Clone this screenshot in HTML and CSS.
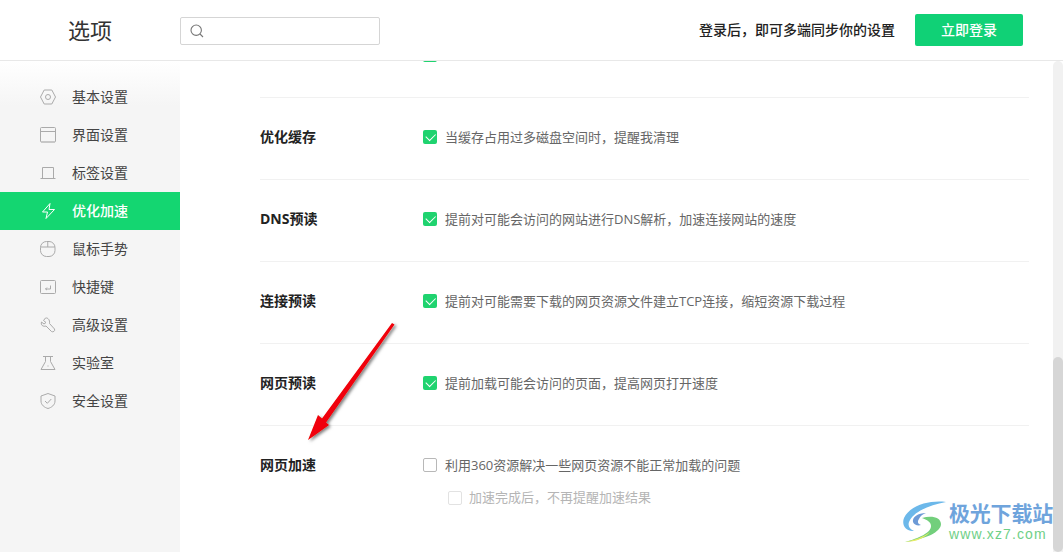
FILE: index.html
```html
<!DOCTYPE html>
<html lang="zh-CN">

<head>
    <meta charset="UTF-8">
    <title>选项</title>
    <link rel="stylesheet" href="styles.css">
</head>

<body>
    <header class="top-bar">
        <h1 class="page-title">选项</h1>
        <label class="search-box">
            <svg width="16" height="16" viewBox="0 0 16 16" fill="none" stroke="#777" stroke-width="1.1">
                <circle cx="7.2" cy="7.2" r="5.2" />
                <path d="M11 11l3 3" />
            </svg>
        </label>
        <p class="login-tip">登录后，即可多端同步你的设置</p>
        <button class="login-btn"><span class="btn-label">立即登录</span></button>
    </header>

    <div class="main">
        <!-- side menu -->
        <nav class="side-menu">
            <a class="menu-item">
                <svg viewBox="0 0 16 16" width="16" height="16">
                    <path d="M4.200 1h7.600L15.500 8l-3.700 7H4.200L.5 8z" />
                    <circle cx="8" cy="8" r="2.500" />
                </svg>
                <span class="menu-label">基本设置</span>
            </a>
            <a class="menu-item">
                <svg viewBox="0 0 16 16" width="16" height="16">
                    <rect x=".5" y=".5" width="15" height="14.500" rx="1" />
                    <path d="M.5 4.500h15" />
                    <path class="thick" d="M1 15h14" />
                </svg>
                <span class="menu-label">界面设置</span>
            </a>
            <a class="menu-item">
                <svg viewBox="0 0 16 16" width="16" height="16">
                    <path d="M2.500 13.500V2.500h11v11M.5 13.500h15" />
                </svg>
                <span class="menu-label">标签设置</span>
            </a>
            <a class="menu-item active">
                <svg viewBox="0 0 16 16" width="16" height="16">
                    <path d="M10 .5L2.500 9h5L6 15.500 14.500 6.500H9z" />
                </svg>
                <span class="menu-label">优化加速</span>
            </a>
            <a class="menu-item">
                <svg viewBox="0 0 16 16" width="16" height="16">
                    <rect x=".5" y=".5" width="14.500" height="15" rx="6" />
                    <path d="M7.750 .5v5.500M.5 6h14.500" />
                </svg>
                <span class="menu-label">鼠标手势</span>
            </a>
            <a class="menu-item">
                <svg viewBox="0 0 16 16" width="16" height="16">
                    <rect x=".5" y="1.500" width="15" height="13" rx="1" />
                    <path d="M10.500 6.500v3.500H5.500M7 8.500L5.500 10 7 11" />
                </svg>
                <span class="menu-label">快捷键</span>
            </a>
            <a class="menu-item">
                <svg viewBox="0 0 16 16" width="16" height="16">
                    <path d="M5.500 1L3.500 3.500 6 5.500 4 7 1.500 5C.5 8 3 10 6 9l5.500 5.500c1.500 1 4-.5 3-2.500l-5-5.500C10 3 8 .5 5.500 1z" />
                </svg>
                <span class="menu-label">高级设置</span>
            </a>
            <a class="menu-item">
                <svg viewBox="0 0 16 16" width="16" height="16">
                    <path d="M3 1.500h10M5.500 1.500v5L1 14.500h14L10.500 6.500v-5M7.500 11h1" />
                </svg>
                <span class="menu-label">实验室</span>
            </a>
            <a class="menu-item">
                <svg viewBox="0 0 16 16" width="16" height="16">
                    <path d="M8 .5l7 2.500v5c0 4-3.500 6.500-7 7.500-3.500-1-7-3.500-7-7.500V3z" />
                    <path d="M5 8l2.300 2.300L11.300 6" />
                </svg>
                <span class="menu-label">安全设置</span>
            </a>
        </nav>

        <!-- settings list, scrolled part way down -->
        <section class="content">
            <div class="settings">
                <div class="row">
                    <span class="row-name"></span>
                    <div class="row-body">
                        <div class="check-line">
                            <span class="box on"></span>
                        </div>
                    </div>
                </div>
                <div class="row">
                    <span class="row-name">优化缓存</span>
                    <div class="row-body">
                        <div class="check-line">
                            <span class="box on"></span>
                            当缓存占用过多磁盘空间时，提醒我清理
                        </div>
                    </div>
                </div>
                <div class="row">
                    <span class="row-name">DNS预读</span>
                    <div class="row-body">
                        <div class="check-line">
                            <span class="box on"></span>
                            提前对可能会访问的网站进行DNS解析，加速连接网站的速度
                        </div>
                    </div>
                </div>
                <div class="row">
                    <span class="row-name">连接预读</span>
                    <div class="row-body">
                        <div class="check-line">
                            <span class="box on"></span>
                            提前对可能需要下载的网页资源文件建立TCP连接，缩短资源下载过程
                        </div>
                    </div>
                </div>
                <div class="row">
                    <span class="row-name">网页预读</span>
                    <div class="row-body">
                        <div class="check-line">
                            <span class="box on"></span>
                            提前加载可能会访问的页面，提高网页打开速度
                        </div>
                    </div>
                </div>
                <div class="row last">
                    <span class="row-name">网页加速</span>
                    <div class="row-body">
                        <div class="check-line">
                            <span class="box"></span>
                            利用360资源解决一些网页资源不能正常加载的问题
                        </div>
                        <div class="check-line sub">
                            <span class="box"></span>
                            加速完成后，不再提醒加速结果
                        </div>
                    </div>
                </div>
            </div>

            <div class="scroll-track">
                <div class="scroll-thumb"></div>
            </div>

            <!-- red arrow drawn over the page -->
            <svg class="arrow" width="110" height="140" viewBox="0 0 110 140">
                <defs>
                    <filter id="arrow-shadow" x="-30%" y="-30%" width="160%" height="160%">
                        <feDropShadow dx="2" dy="1.500" stdDeviation="1.500" flood-color="#000" flood-opacity="0.5" />
                    </filter>
                </defs>
                <path d="M91 3L93.500 4.500 25 102.500 28 105 7 120 17 95 21 98.500z" fill="#f00507"
                    filter="url(#arrow-shadow)" />
            </svg>

            <div class="watermark">
                <svg width="46" height="42" viewBox="0 0 46 42">
                    <path d="M44 1C28-1 8 4 2 17c-3 8 3 14 10 13-5-2-7-6-4-11C13 10 28 4 44 1z" fill="#6cb8ea" />
                    <path d="M24 12c-8 0-14 4-13 9 1 3 5 4 8 3-3-1-4-3-2-6 1-3 4-5 7-6z" fill="#6d9ad6" />
                    <path d="M20 17c9-3 19-1 19 6 0 8-15 15-36 18 14-4 26-9 26-16 0-4-4-6-9-8z" fill="#72cf7c" />
                    <path d="M3 41c10-2 18-5 25-10-5 6-14 10-25 10z" fill="#e7ec63" />
                </svg>
                <div class="wm-text">
                    <span class="wm-name">极光下载站</span>
                    <span class="wm-url">www.xz7.com</span>
                </div>
            </div>
        </section>
    </div>
</body>

</html>
```

FILE: styles.css
```css
* {
    box-sizing: border-box;
    margin: 0;
    padding: 0;
}

body {
    width: 1063px;
    height: 552px;
    overflow: hidden;
    display: flex;
    flex-direction: column;
    background-color: #fff;
    color: #333;
    font-family: "Open Sans", "Noto Sans CJK SC", sans-serif;
}

.top-bar {
    display: flex;
    align-items: center;
    flex: none;
    height: 61px;
    border-bottom: 1px solid #e8e8e8;
    padding-right: 40px;
}

.page-title {
    width: 180px;
    padding-left: 68px;
    margin-bottom: 2px;
    font-size: 22px;
    font-weight: 400;
    color: #333;
}

.search-box {
    display: flex;
    align-items: center;
    width: 200px;
    height: 28px;
    margin-top: 2px;
    border: 1px solid #d5d5d5;
    border-radius: 2px;
    padding-left: 8px;
}

.login-tip {
    margin-left: auto;
    margin-bottom: 2px;
    font-size: 14px;
    font-weight: 500;
    color: #222;
}

.login-btn {
    display: flex;
    align-items: center;
    justify-content: center;
    width: 108px;
    height: 32px;
    margin-left: 20px;
    border: none;
    border-radius: 2px;
    background-color: #10d176;
    color: #fff;
    font-family: inherit;
    font-size: 14px;
    font-weight: 500;
}

.btn-label {
    margin-bottom: 2px;
}

.main {
    display: flex;
    flex: 1;
    min-height: 0;
}

.side-menu {
    flex: none;
    width: 180px;
    padding-top: 17px;
    background: linear-gradient(#fff, #f5f5f5 45px);
}

.menu-item {
    display: flex;
    align-items: center;
    gap: 16px;
    height: 38px;
    padding-left: 40px;
    font-size: 14px;
    color: #444;
}

.menu-label {
    margin-bottom: 2px;
}

.menu-item svg {
    fill: none;
    stroke: #aaa;
    stroke-width: 1;
}

.menu-item svg .thick {
    stroke: #c4c4c4;
    stroke-width: 1.500;
}

.menu-item.active {
    background-color: #14d671;
    color: #fff;
    font-weight: 500;
}

.menu-item.active svg {
    stroke: #fff;
}

.content {
    position: relative;
    flex: 1;
    display: flex;
    overflow: hidden;
}

.settings {
    flex: 1;
    margin-top: -45px;
    padding: 0 24px 0 80px;
}

.row {
    display: flex;
    height: 82px;
    border-bottom: 1px solid #f1f1f1;
    padding-top: 27px;
}

.row.last {
    border-bottom: none;
}

.row-name {
    flex: none;
    width: 163px;
    height: 22px;
    margin-top: 1px;
    line-height: 22px;
    font-size: 14px;
    font-weight: 700;
    color: #222;
}

.check-line {
    display: flex;
    align-items: center;
    gap: 8px;
    height: 22px;
    font-size: 13px;
    color: #666;
}

.check-line.sub {
    margin-top: 10px;
    padding-left: 25px;
    gap: 7px;
    color: #b5b5b5;
}

.box {
    flex: none;
    width: 14px;
    height: 14px;
    margin-top: 2px;
    border: 1px solid #b8b8b8;
    border-radius: 2px;
}

.sub .box {
    margin-top: 4px;
    border-color: #e2e2e2;
}

.box.on {
    position: relative;
    border: none;
    background-color: #1fd36f;
}

/* the tick inside a checked box */
.box.on::after {
    content: "";
    position: absolute;
    left: 3px;
    top: 2.500px;
    width: 8px;
    height: 4.500px;
    border-left: 1.200px solid #fff;
    border-bottom: 1.200px solid #fff;
    transform: rotate(-45deg);
}

.scroll-track {
    flex: none;
    width: 10px;
    border-radius: 5px 5px 0 0;
    background-color: #f1f1f1;
    display: flex;
    flex-direction: column;
    justify-content: flex-end;
}

.scroll-thumb {
    height: 195px;
    border-radius: 5px;
    background-color: #d6d6d6;
}

.arrow {
    position: absolute;
    left: 121px;
    top: 259px;
}

.watermark {
    position: absolute;
    left: 722px;
    top: 440px;
    display: flex;
    align-items: center;
    gap: 1px;
}

.wm-text {
    display: flex;
    flex-direction: column;
    margin-top: -2px;
}

.wm-name {
    font-family: "Noto Sans CJK SC", sans-serif;
    font-size: 21px;
    line-height: 25px;
    font-weight: 700;
    letter-spacing: -.2px;
    color: #6fa4dc;
}

.wm-url {
    font-family: "Liberation Sans", sans-serif;
    font-size: 14px;
    line-height: 18px;
    letter-spacing: 1.100px;
    color: #6fcf87;
}
```
